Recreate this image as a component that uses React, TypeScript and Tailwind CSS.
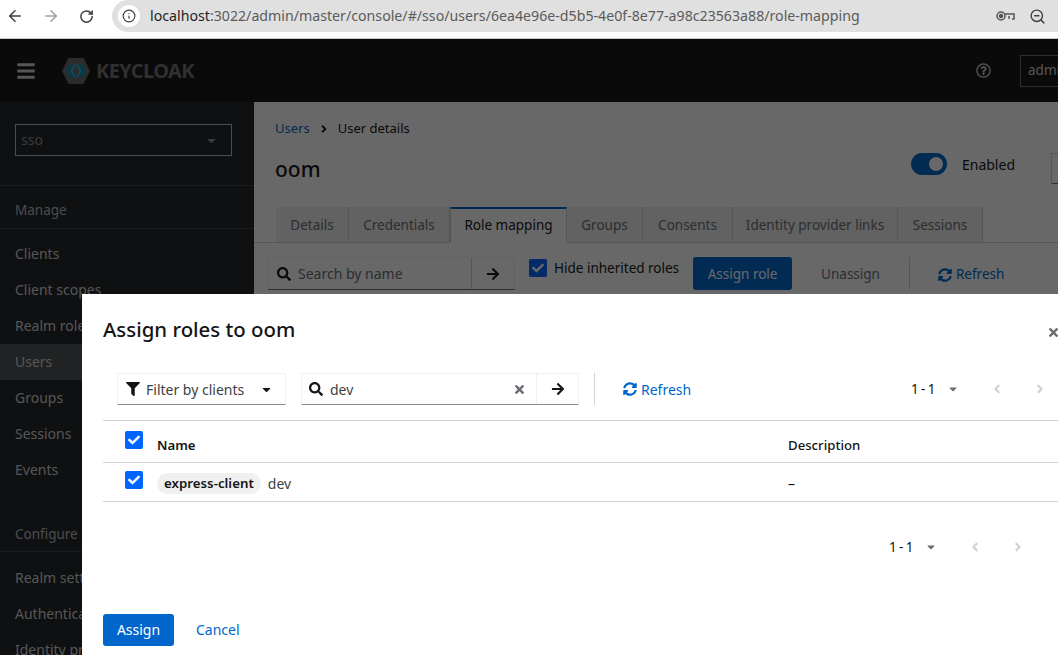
import { ArrowLeft, ArrowRight, RotateCw, Info, ZoomOut } from 'lucide-react';
import {
  FaAngleLeft,
  FaAngleRight,
  FaArrowRight,
  FaBars,
  FaCaretDown,
  FaCheck,
  FaFilter,
  FaRegQuestionCircle,
  FaSearch,
  FaSyncAlt,
  FaTimes,
} from 'react-icons/fa';

const MANAGE = ['Clients', 'Client scopes', 'Realm roles', 'Users', 'Groups', 'Sessions', 'Events'];
const CONFIGURE = ['Realm settings', 'Authentication', 'Identity providers'];
const TABS = [
  { label: 'Details', w: 'w-[73px]' },
  { label: 'Credentials', w: 'w-[101px]' },
  { label: 'Role mapping', w: 'w-[117px]', active: true },
  { label: 'Groups', w: 'w-[76px]' },
  { label: 'Consents', w: 'w-[90px]' },
  { label: 'Identity provider links', w: 'w-[165px]' },
  { label: 'Sessions', w: 'w-[85px]' },
];

function Checkbox({ className = '' }: { className?: string }) {
  return (
    <span className={`w-[18px] h-[18px] rounded-[2px] bg-[#0066ff] flex items-center justify-center text-white shrink-0 ${className}`}>
      <FaCheck size={12} />
    </span>
  );
}

function Pagination({ className = '' }: { className?: string }) {
  return (
    <div className={`flex items-center text-[13.5px] text-[#151515] ${className}`}>
      <span className="w-[23px] pl-[1px] tracking-[-0.6px] whitespace-nowrap">1 - 1</span>
      <FaCaretDown size={12} className="ml-[14px] text-[#6a6e73]" />
      <FaAngleLeft size={14} className="ml-[31px] text-[#d2d2d2]" />
      <FaAngleRight size={14} className="ml-[29px] text-[#d2d2d2]" />
    </div>
  );
}

function KeycloakLogo() {
  return (
    <div className="flex items-center">
      <svg width="28" height="28" viewBox="0 0 30 28">
        <path d="M7 0h16l7 14-7 14H7L0 14z" fill="#6a6a6a" />
        <path d="M9 7l-5 7 5 7h4l-5-7 5-7zM21 7l5 7-5 7h-4l5-7-5-7z" fill="#0090b4" />
        <path d="M13 7l-4 7 4 7h2l-4-7 4-7zM17 7l4 7-4 7h-2l4-7-4-7z" fill="#2ab4d6" />
      </svg>
      <span className="ml-[6px] text-[20px] leading-[28px] font-bold tracking-[-0.6px] text-[#747474]">KEYCLOAK</span>
    </div>
  );
}

function Sidebar() {
  return (
    <aside className="w-[254px] shrink-0 bg-[#212427] text-[#d2d2d2] text-[14px]">
      <div className="h-[84px] pt-[22px] pl-[15px] border-b border-[#3c3f42]">
        <div className="w-[217px] h-[32px] border border-[#b8bbbe] flex items-center justify-between pl-[5px] pr-[13px] text-[#8a8d90]">
          <span className="-mt-[1px]">sso</span>
          <FaCaretDown size={13} />
        </div>
      </div>
      <div className="h-[43px] pl-[15px] pt-[7px] flex items-center border-b border-[#3c3f42] text-[13.5px] text-[#b8bbbe]">Manage</div>
      <nav className="pt-[7px]">
        {MANAGE.map(item => (
          <div key={item} className={`h-[36px] pl-[15px] pb-[2px] flex items-center ${item === 'Users' ? 'bg-[#4f5255]' : ''}`}>
            {item}
          </div>
        ))}
      </nav>
      <div className="mt-[29px] h-[35px] pl-[15px] flex items-center border-b border-[#3c3f42] text-[13.5px] text-[#b8bbbe]">Configure</div>
      <nav className="pt-[8px]">
        {CONFIGURE.map(item => (
          <div key={item} className="h-[36px] pl-[15px] pb-[2px] flex items-center whitespace-nowrap">
            {item}
          </div>
        ))}
      </nav>
    </aside>
  );
}

function UserDetails() {
  return (
    <main className="flex-1 min-w-0 bg-white text-[#151515] text-[13.5px]">
      <div className="pl-[21px] pt-[18px] flex items-center h-[36px] text-[13px]">
        <span className="text-[#06c]">Users</span>
        <FaAngleRight size={12} className="mx-[8px]" />
        <span>User details</span>
      </div>
      <div className="pl-[21px] pt-[15px] h-[69px] flex items-start justify-between">
        <h1 className="text-[21px] leading-[32px] font-medium">oom</h1>
        <div className="flex items-start -mr-[13px]">
          <span className="w-[36px] h-[22px] rounded-full bg-[#06c] flex items-center justify-end pr-[4px]">
            <span className="w-[14px] h-[14px] rounded-full bg-white" />
          </span>
          <span className="ml-[15px] mt-[1px] leading-[22px] text-[14px]">Enabled</span>
          <span className="ml-[36px] w-[20px] h-[31px] border border-[#d2d2d2] border-b-[#6a6e73]" />
        </div>
      </div>
      <div className="pl-[22px] flex border-b border-[#d2d2d2] h-[36px]">
        {TABS.map(tab => (
          <div
            key={tab.label}
            className={`${tab.w} shrink-0 flex items-center justify-center border-r border-[#d2d2d2] whitespace-nowrap ${
              tab.active ? 'h-[36px] pb-[1px] bg-white border-t-2 border-t-[#06c] border-l text-[#151515]' : 'h-[35px] pt-[2px] bg-[#f0f0f0] text-[#6a6e73]'
            }`}
          >
            {tab.label}
          </div>
        ))}
      </div>
      <div className="pl-[14px] pt-[14px] flex items-start">
        <div className="w-[247px] h-[33px] flex border border-[#f0f0f0] border-b-[#6a6e73]">
          <div className="flex-1 flex items-center pl-[8px] text-[14px] text-[#6a6e73]">
            <FaSearch size={14} className="text-[#151515] mr-[7px]" />
            Search by name
          </div>
          <div className="w-[43px] flex items-center justify-center border-l border-[#d2d2d2]">
            <FaArrowRight size={14} />
          </div>
        </div>
        <Checkbox className="ml-[14px] mt-[2px]" />
        <span className="ml-[7px] mt-[1px] leading-[20px] whitespace-nowrap">Hide inherited roles</span>
        <button className="ml-[14px] h-[33px] w-[99px] pt-[2px] rounded-[3px] bg-[#06c] text-white">Assign role</button>
        <span className="ml-[29px] h-[33px] pt-[2px] flex items-center text-[#6a6e73]">Unassign</span>
        <span className="ml-[29px] h-[33px] w-px bg-[#d2d2d2]" />
        <span className="ml-[28px] h-[33px] pt-[2px] flex items-center gap-[4px] text-[#06c]">
          <FaSyncAlt size={14} />
          Refresh
        </span>
      </div>
    </main>
  );
}

function AssignRolesModal() {
  return (
    <div className="absolute left-[82px] top-[255px] w-[1000px] h-[400px] bg-white text-[14px] text-[#151515] pl-[21px] pr-[24px] flex flex-col">
      <FaTimes size={13} className="absolute left-[965px] top-[32px] text-[#6a6e73]" />
      <h2 className="mt-[19px] h-[32px] text-[20.4px] leading-[32px] font-medium text-[#151515]">Assign roles to oom</h2>

      <div className="mt-[28px] ml-[14px] flex items-start">
        <div className="w-[169px] h-[32px] flex items-center pl-[8px] border border-[#f0f0f0] border-b-[#8a8d90]">
          <FaFilter size={14} />
          <span className="ml-[6px] text-[#3c3f42] whitespace-nowrap">Filter by clients</span>
          <FaCaretDown size={13} className="ml-[16px]" />
        </div>
        <div className="ml-[15px] w-[278px] h-[32px] flex border border-[#f0f0f0] border-b-[#8a8d90]">
          <div className="flex-1 flex items-center pl-[7px]">
            <FaSearch size={14} />
            <span className="ml-[7px] text-[#3c3f42]">dev</span>
            <FaTimes size={13} className="ml-auto mr-[10px] text-[#6a6e73]" />
          </div>
          <div className="w-[42px] flex items-center justify-center border-l border-[#f0f0f0]">
            <FaArrowRight size={14} />
          </div>
        </div>
        <span className="ml-[15px] h-[32px] w-px bg-[#d2d2d2]" />
        <span className="ml-[28px] h-[32px] flex items-center gap-[4px] text-[#06c]">
          <FaSyncAlt size={14} />
          Refresh
        </span>
        <Pagination className="ml-auto h-[32px] pr-[11px]" />
      </div>

      <div className="mt-[15px] border-t border-[#d2d2d2]">
        <div className="h-[42px] flex border-b border-[#d2d2d2] text-[13.2px]">
          <Checkbox className="ml-[22px] mt-[10px]" />
          <span className="ml-[14px] w-[631px] pt-[15px] font-semibold">Name</span>
          <span className="pt-[15px] font-medium">Description</span>
        </div>
        <div className="h-[39px] flex border-b border-[#d2d2d2]">
          <Checkbox className="ml-[22px] mt-[8px]" />
          <div className="ml-[14px] w-[631px] pt-[2px] flex items-center">
            <span className="h-[21px] px-[7px] pt-[1px] rounded-full bg-[#f0f0f0] flex items-center text-[13.3px] font-semibold text-[#151515]">
              express-client
            </span>
            <span className="ml-[7px] text-[#3c3f42]">dev</span>
          </div>
          <span className="pt-[2px] flex items-center">–</span>
        </div>
      </div>

      <Pagination className="self-end mt-[35px] h-[20px] pr-[33px]" />

      <div className="mt-[57px] flex items-center">
        <button className="h-[32px] w-[71px] rounded-[3px] bg-[#06c] text-white">
          <span className="block -mt-[1px]">Assign</span>
        </button>
        <span className="ml-[22px] -mt-[1px] text-[#06c]">Cancel</span>
      </div>
    </div>
  );
}

export default function App() {
  return (
    <div className="w-[1058px] h-[655px] overflow-hidden bg-white font-['Noto_Sans',sans-serif]">
      <div className="h-[39px] border-b border-[#c8c8c8] flex items-start text-[#3f3f3f]">
        <div className="h-[32px] w-[112px] flex items-center shrink-0">
          <ArrowLeft size={18} className="ml-[6px]" />
          <ArrowRight size={18} className="ml-[18px] text-[#a0a0a0]" />
          <RotateCw size={15} className="ml-[19px]" strokeWidth={2.4} />
        </div>
        <div className="flex-1 h-[32px] bg-[#e0e0e0] rounded-l-[16px] flex items-center pl-[6px]">
          <span className="w-[22px] h-[22px] rounded-full bg-white flex items-center justify-center">
            <Info size={14} />
          </span>
          <span className="ml-[10px] text-[14.18px] whitespace-nowrap text-[#5b5b5b]">
            <span className="text-[#1f1f1f]">localhost</span>:3022/admin/master/console/#/sso/users/6ea4e96e-d5b5-4e0f-8e77-a98c23563a88/role-mapping
          </span>
          <svg width="19" height="12" viewBox="0 0 19 12" className="ml-auto shrink-0" fill="none" stroke="#555" strokeWidth="1.5">
            <circle cx="5" cy="6" r="4" />
            <circle cx="5" cy="6" r="1.5" fill="#555" />
            <path d="M9 4h9v5h-2M13 9V6" />
          </svg>
          <ZoomOut size={17} className="ml-[14px] mr-[12px] shrink-0" />
        </div>
      </div>

      <div className="relative h-[616px] overflow-hidden">
        <header className="h-[63px] bg-[#151515] flex items-center pl-[16px]">
          <FaBars size={20} className="text-[#d2d2d2]" />
          <div className="ml-[26px]">
            <KeycloakLogo />
          </div>
          <FaRegQuestionCircle size={15} className="ml-auto text-[#c8c8c8]" />
          <div className="ml-[29px] w-[38px] h-[32px] border-y border-l border-[#6a6e73] flex items-center pl-[7px] text-[13.5px] text-[#d2d2d2] overflow-hidden">
            admin
          </div>
        </header>
        <div className="flex h-[553px]">
          <Sidebar />
          <UserDetails />
        </div>
        <div className="absolute inset-0 bg-[rgba(3,3,3,0.6)]" />
        <AssignRolesModal />
      </div>
    </div>
  );
}
